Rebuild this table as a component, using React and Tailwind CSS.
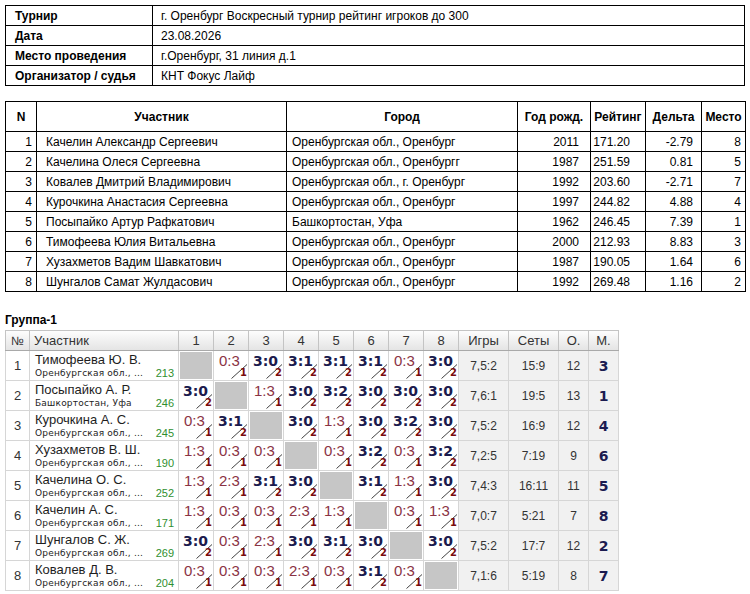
import React from "react";

const info = [
  ["Турнир", "г. Оренбург Воскресный турнир рейтинг игроков до 300"],
  ["Дата", "23.08.2026"],
  ["Место проведения", "г.Оренбург, 31 линия д.1"],
  ["Организатор / судья", "КНТ Фокус Лайф"],
];

const players = [
  [1, "Качелин Александр Сергеевич", "Оренбургская обл., Оренбург", "2011", "171.20", "-2.79", "8"],
  [2, "Качелина Олеся Сергеевна", "Оренбургская обл., Оренбургг", "1987", "251.59", "0.81", "5"],
  [3, "Ковалев Дмитрий Владимирович", "Оренбургская обл., г. Оренбург", "1992", "203.60", "-2.71", "7"],
  [4, "Курочкина Анастасия Сергеевна", "Оренбургская обл., Оренбург", "1997", "244.82", "4.88", "4"],
  [5, "Посыпайко Артур Рафкатович", "Башкортостан, Уфа", "1962", "246.45", "7.39", "1"],
  [6, "Тимофеева Юлия Витальевна", "Оренбургская обл., Оренбург", "2000", "212.93", "8.83", "3"],
  [7, "Хузахметов Вадим Шавкатович", "Оренбургская обл., Оренбург", "1987", "190.05", "1.64", "6"],
  [8, "Шунгалов Самат Жулдасович", "Оренбургская обл., Оренбург", "1992", "269.48", "1.16", "2"],
];

const group = [
  ["Тимофеева Ю. В.", "Оренбургская обл., ...", "213", ["X", "0:3", "3:0", "3:1", "3:1", "3:1", "0:3", "3:0"], "7,5:2", "15:9", "12", "3"],
  ["Посыпайко А. Р.", "Башкортостан, Уфа", "246", ["3:0", "X", "1:3", "3:0", "3:2", "3:0", "3:0", "3:0"], "7,6:1", "19:5", "13", "1"],
  ["Курочкина А. С.", "Оренбургская обл., ...", "245", ["0:3", "3:1", "X", "3:0", "1:3", "3:0", "3:2", "3:0"], "7,5:2", "16:9", "12", "4"],
  ["Хузахметов В. Ш.", "Оренбургская обл., ...", "190", ["1:3", "0:3", "0:3", "X", "0:3", "3:2", "0:3", "3:2"], "7,2:5", "7:19", "9", "6"],
  ["Качелина О. С.", "Оренбургская обл., ...", "252", ["1:3", "2:3", "3:1", "3:0", "X", "3:1", "1:3", "3:0"], "7,4:3", "16:11", "11", "5"],
  ["Качелин А. С.", "Оренбургская обл., ...", "171", ["1:3", "0:3", "0:3", "2:3", "1:3", "X", "0:3", "1:3"], "7,0:7", "5:21", "7", "8"],
  ["Шунгалов С. Ж.", "Оренбургская обл., ...", "269", ["3:0", "0:3", "2:3", "3:0", "3:1", "3:0", "X", "3:0"], "7,5:2", "17:7", "12", "2"],
  ["Ковалев Д. В.", "Оренбургская обл., ...", "204", ["0:3", "0:3", "0:3", "2:3", "0:3", "3:1", "0:3", "X"], "7,1:6", "5:19", "8", "7"],
];

const cellB = "border border-black";

function ScoreCell({ s }) {
  if (s === "X") {
    return (
      <td className="border border-[#d6d6d6] p-0 bg-white">
        <div className="m-[1px] h-[27px] bg-[#c6c6c6]" />
      </td>
    );
  }
  const [a, b] = s.split(":").map(Number);
  const win = a > b;
  return (
    <td className="border border-[#d6d6d6] p-0 bg-white align-top">
      <div className="relative h-[29px]">
        <span
          className={
            win
              ? "absolute left-[4px] top-[3px] text-[14px] leading-[14px] font-bold text-[#1b1b4d] font-['DejaVu_Sans',Verdana,sans-serif]"
              : "absolute left-[5px] top-[2px] text-[15px] leading-[15px] text-[#8a3344] font-['Liberation_Sans',Arial,sans-serif]"
          }
        >
          {s}
        </span>
        <svg className="absolute left-[17px] top-[13px]" width="17" height="15" viewBox="0 0 17 15">
          <line x1="0.5" y1="14.5" x2="16" y2="0.5" stroke="#2a2a2a" strokeWidth="0.9" />
        </svg>
        <span className="absolute left-[26px] top-[17px] text-[10px] leading-[10px] font-bold text-[#7a0c0c] font-['DejaVu_Sans',Verdana,sans-serif]">
          {win ? "2" : "1"}
        </span>
      </div>
    </td>
  );
}

export default function App() {
  return (
    <div className="bg-white w-[750px] h-[594px] overflow-hidden px-[5px] pt-[5px] font-['Liberation_Sans',Arial,sans-serif] text-black">
      <table className="w-[740px] table-fixed border-collapse text-[12px] leading-[14px]">
        <colgroup>
          <col className="w-[147px]" />
          <col />
        </colgroup>
        <tbody>
          {info.map(([k, v]) => (
            <tr key={k} className="h-[20px]">
              <td className={`${cellB} pl-[9px] py-0 font-bold`}>{k}</td>
              <td className={`${cellB} pl-[8px] py-0`}>{v}</td>
            </tr>
          ))}
        </tbody>
      </table>

      <table className="mt-[15px] w-[740px] table-fixed border-collapse text-[12px] leading-[14px]">
        <colgroup>
          <col className="w-[31px]" />
          <col className="w-[250px]" />
          <col className="w-[231px]" />
          <col className="w-[73px]" />
          <col className="w-[55px]" />
          <col className="w-[56px]" />
          <col className="w-[44px]" />
        </colgroup>
        <thead>
          <tr className="h-[30px] font-bold">
            <th className={`${cellB} p-0 text-center`}>N</th>
            <th className={`${cellB} p-0 text-center`}>Участник</th>
            <th className={`${cellB} p-0 text-center`}>Город</th>
            <th className={`${cellB} p-0 text-center`}>Год рожд.</th>
            <th className={`${cellB} p-0 text-center`}>Рейтинг</th>
            <th className={`${cellB} p-0 text-center`}>Дельта</th>
            <th className={`${cellB} p-0 text-center`}>Место</th>
          </tr>
        </thead>
        <tbody>
          {players.map((p) => (
            <tr key={p[0]} className="h-[20px]">
              <td className={`${cellB} py-0 pr-[4px] text-right`}>{p[0]}</td>
              <td className={`${cellB} py-0 pl-[9px]`}>{p[1]}</td>
              <td className={`${cellB} py-0 pl-[5px]`}>{p[2]}</td>
              <td className={`${cellB} py-0 pr-[11px] text-right`}>{p[3]}</td>
              <td className={`${cellB} py-0 pr-[15px] text-right`}>{p[4]}</td>
              <td className={`${cellB} py-0 pr-[8px] text-right`}>{p[5]}</td>
              <td className={`${cellB} py-0 pr-[4px] text-right`}>{p[6]}</td>
            </tr>
          ))}
        </tbody>
      </table>

      <div className="mt-[21px] mb-[3px] text-[12px] leading-[14px] font-bold">Группа-1</div>

      <table className="w-[613px] table-fixed border-collapse border border-[#a9a9a9] text-[12px] leading-[14px] text-[#333]">
        <colgroup>
          <col className="w-[24px]" />
          <col className="w-[149px]" />
          {[1, 2, 3, 4, 5, 6, 7, 8].map((i) => (
            <col key={i} className="w-[35px]" />
          ))}
          <col className="w-[50px]" />
          <col className="w-[50px]" />
          <col className="w-[30px]" />
          <col className="w-[30px]" />
        </colgroup>
        <thead>
          <tr className="h-[20px] bg-linear-to-b from-[#fdfdfd] to-[#e3e3e3] text-[13px] font-normal text-[#333]">
            <th className="border border-[#c4c4c4] border-b-[#a9a9a9] p-0 font-normal text-center text-[12px]">№</th>
            <th className="border border-[#c4c4c4] border-b-[#a9a9a9] p-0 pl-[4px] font-normal text-left">Участник</th>
            {[1, 2, 3, 4, 5, 6, 7, 8].map((i) => (
              <th key={i} className="border border-[#c4c4c4] border-b-[#a9a9a9] p-0 font-normal text-center">
                {i}
              </th>
            ))}
            <th className="border border-[#c4c4c4] border-b-[#a9a9a9] p-0 font-normal text-center">Игры</th>
            <th className="border border-[#c4c4c4] border-b-[#a9a9a9] p-0 font-normal text-center">Сеты</th>
            <th className="border border-[#c4c4c4] border-b-[#a9a9a9] p-0 font-normal text-center">О.</th>
            <th className="border border-[#c4c4c4] border-b-[#a9a9a9] p-0 font-normal text-center">М.</th>
          </tr>
        </thead>
        <tbody>
          {group.map((g, idx) => (
            <tr key={idx} className="h-[30px]">
              <td className="border border-[#d6d6d6] p-0 text-center text-[13px] bg-white">{idx + 1}</td>
              <td className="border border-[#d6d6d6] p-0 pl-[5px] pr-[4px] bg-white align-top">
                <div className="pt-[1px] text-[13px] leading-[15px] text-[#1e1e1e]">{g[0]}</div>
                <div className="flex items-end justify-between leading-[12px]">
                  <span className="text-[9px] tracking-[0.2px] text-[#222] font-['DejaVu_Sans',Verdana,sans-serif]">{g[1]}</span>
                  <span className="text-[11px] text-[#2f8f2f]">{g[2]}</span>
                </div>
              </td>
              {g[3].map((s, j) => (
                <ScoreCell key={j} s={s} />
              ))}
              <td className="border border-[#d6d6d6] p-0 text-center bg-[#f1f1f1] text-[12px]">{g[4]}</td>
              <td className="border border-[#d6d6d6] p-0 text-center bg-[#f1f1f1] text-[12px]">{g[5]}</td>
              <td className="border border-[#d6d6d6] p-0 text-center bg-[#f1f1f1] text-[12px]">{g[6]}</td>
              <td className="border border-[#d6d6d6] p-0 text-center bg-[#f1f1f1] text-[14px] font-bold text-[#1b1b50] font-['DejaVu_Sans',Verdana,sans-serif]">
                {g[7]}
              </td>
            </tr>
          ))}
        </tbody>
      </table>
    </div>
  );
}
